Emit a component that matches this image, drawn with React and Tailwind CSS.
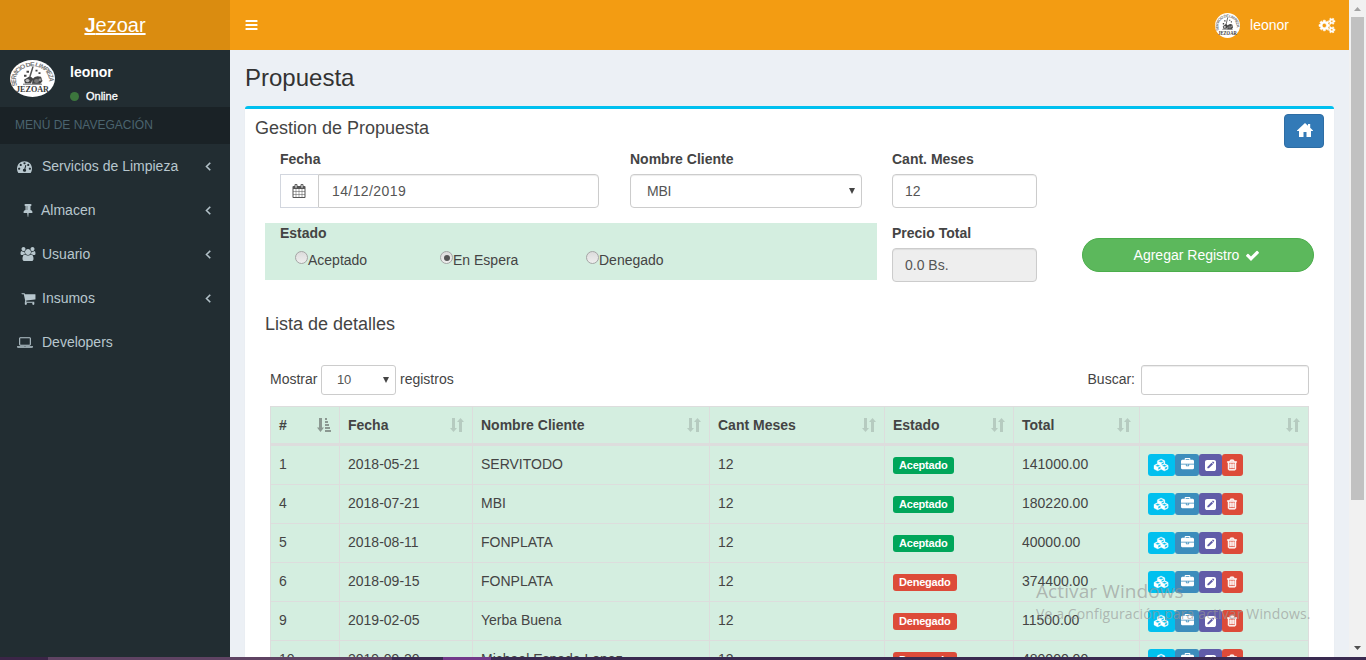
import React from "react";

const ICONS = {
  tachometer: [1792, "M384 1152q0-53-37.5-90.5t-90.5-37.5-90.5 37.5-37.5 90.5 37.5 90.5 90.5 37.5 90.5-37.5 37.5-90.5zm192-448q0-53-37.5-90.5t-90.5-37.5-90.5 37.5-37.5 90.5 37.5 90.5 90.5 37.5 90.5-37.5 37.5-90.5zm428 481l101-382q6-26-7.5-48.5t-38.5-29.5-48 6.5-30 39.5l-101 382q-60 5-107 43.5t-63 98.5q-20 77 20 146t117 89 146-20 89-117q16-60-6-117t-72-91zm660-33q0-53-37.5-90.5t-90.5-37.5-90.5 37.5-37.5 90.5 37.5 90.5 90.5 37.5 90.5-37.5 37.5-90.5zm-640-640q0-53-37.5-90.5t-90.5-37.5-90.5 37.5-37.5 90.5 37.5 90.5 90.5 37.5 90.5-37.5 37.5-90.5zm448 192q0-53-37.5-90.5t-90.5-37.5-90.5 37.5-37.5 90.5 37.5 90.5 90.5 37.5 90.5-37.5 37.5-90.5zm320 448q0 261-141 483-19 29-54 29h-1402q-35 0-54-29-141-221-141-483 0-182 71-348t191-286 286-191 348-71 348 71 286 191 191 286 71 348z"],
  users: [2048, "M657 896q-162 5-265 128h-134q-82 0-138-40.5t-56-118.5q0-353 124-353 6 0 43.5 21t97.5 42.5 119 21.5q67 0 133-23-5 37-5 66 0 139 81 256zm1071 637q0 120-73 189.5t-194 69.5h-874q-121 0-194-69.5t-73-189.5q0-53 3.5-103.5t14-109 26.5-108.5 43-97.5 62-81 85.5-53.5 111.5-20q10 0 43 21.5t73 48 107 48 135 21.5 135-21.5 107-48 73-48 43-21.5q61 0 111.5 20t85.5 53.5 62 81 43 97.5 26.5 108.5 14 109 3.5 103.5zm-1024-1277q0 106-75 181t-181 75-181-75-75-181 75-181 181-75 181 75 75 181zm704 384q0 159-112.5 271.5t-271.5 112.5-271.5-112.5-112.5-271.5 112.5-271.5 271.5-112.5 271.5 112.5 112.5 271.5zm576 225q0 78-56 118.5t-138 40.5h-134q-103-123-265-128 81-117 81-256 0-29-5-66 66 23 133 23 59 0 119-21.5t97.5-42.5 43.5-21q124 0 124 353zm-128-609q0 106-75 181t-181 75-181-75-75-181 75-181 181-75 181 75 75 181z"],
  cart: [1792, "M704 1536q0 52-38 90t-90 38-90-38-38-90 38-90 90-38 90 38 38 90zm896 0q0 52-38 90t-90 38-90-38-38-90 38-90 90-38 90 38 38 90zm128-1088v512q0 24-16.5 42.5t-40.5 21.5l-1044 122q13 60 13 70 0 16-24 64h920q26 0 45 19t19 45-19 45-45 19h-1024q-26 0-45-19t-19-45q0-11 8-31.5t16-36 21.5-40 15.5-29.5l-177-823h-204q-26 0-45-19t-19-45 19-45 45-19h256q16 0 28.5 6.5t19.5 15.5 13 24.5 8 26 5.5 29.5 4.5 26h1201q26 0 45 19t19 45z"],
  tack: [1792, "M800 864v-448q0-14-9-23t-23-9-23 9-9 23v448q0 14 9 23t23 9 23-9 9-23zm672 352q0 26-19 45t-45 19h-429l-51 483q-2 12-10.5 20.5t-20.5 8.5h-1q-27 0-32-27l-76-485h-404q-26 0-45-19t-19-45q0-123 78.5-221.5t177.5-98.5v-512q-52 0-90-38t-38-90 38-90 90-38h640q52 0 90 38t38 90-38 90-90 38v512q99 0 177.5 98.5t78.5 221.5z"],
  angle: [1792, "M1203 544q0 13-10 23l-393 393 393 393q10 10 10 23t-10 23l-50 50q-10 10-23 10t-23-10l-466-466q-10-10-10-23t10-23l466-466q10-10 23-10t23 10l50 50q10 10 10 23z"],
  laptop: [1920, "M416 1280q-66 0-113-47t-47-113v-704q0-66 47-113t113-47h1088q66 0 113 47t47 113v704q0 66-47 113t-113 47h-1088zm-32-864v704q0 13 9.5 22.5t22.5 9.5h1088q13 0 22.5-9.5t9.5-22.5v-704q0-13-9.5-22.5t-22.5-9.5h-1088q-13 0-22.5 9.5t-9.5 22.5zm1376 928h160v96q0 40-47 68t-113 28h-1600q-66 0-113-28t-47-68v-96h1760zm-720 96q16 0 16-16t-16-16h-160q-16 0-16 16t16 16h160z"],
  cogs: [1920, "M896 896q0-106-75-181t-181-75-181 75-75 181 75 181 181 75 181-75 75-181zm768 512q0-52-38-90t-90-38-90 38-38 90q0 53 37.5 90.5t90.5 37.5 90.5-37.5 37.5-90.5zm0-1024q0-52-38-90t-90-38-90 38-38 90q0 53 37.5 90.5t90.5 37.5 90.5-37.5 37.5-90.5zm-384 421v185q0 10-7 19.5t-16 10.5l-155 24q-11 35-32 76 34 48 90 115 7 11 7 20 0 12-7 19-23 30-82.5 89.5t-78.5 59.5q-11 0-21-7l-115-90q-37 19-77 31-11 108-23 155-7 24-30 24h-186q-11 0-20-7.5t-10-17.5l-23-153q-34-10-75-31l-118 89q-7 7-20 7-11 0-21-8-144-133-144-160 0-9 7-19 10-14 41-53t47-61q-23-44-35-82l-152-24q-10-1-17-9.5t-7-19.5v-185q0-10 7-19.5t16-10.5l155-24q11-35 32-76-34-48-90-115-7-11-7-20 0-12 7-20 22-30 82-89t79-59q11 0 21 7l115 90q34-18 77-32 11-108 23-154 7-24 30-24h186q11 0 20 7.5t10 17.5l23 153q34 10 75 31l118-89q8-7 20-7 11 0 21 8 144 133 144 160 0 8-7 19-12 16-42 54t-45 60q23 48 34 82l152 23q10 2 17 10.5t7 19.5zm640 533v140q0 16-149 31-12 27-30 52 51 113 51 138 0 4-4 7-122 71-124 71-8 0-46-47t-52-68q-20 2-30 2t-30-2q-14 21-52 68t-46 47q-2 0-124-71-4-3-4-7 0-25 51-138-18-25-30-52-149-15-149-31v-140q0-16 149-31 13-29 30-52-51-113-51-138 0-4 4-7 4-2 35-20t59-34 30-16q8 0 46 46.5t52 67.5q20-2 30-2t30 2q51-71 92-112l6-2q4 0 124 70 4 3 4 7 0 25-51 138 17 23 30 52 149 15 149 31zm0-1024v140q0 16-149 31-12 27-30 52 51 113 51 138 0 4-4 7-122 71-124 71-8 0-46-47t-52-68q-20 2-30 2t-30-2q-14 21-52 68t-46 47q-2 0-124-71-4-3-4-7 0-25 51-138-18-25-30-52-149-15-149-31v-140q0-16 149-31 13-29 30-52-51-113-51-138 0-4 4-7 4-2 35-20t59-34 30-16q8 0 46 46.5t52 67.5q20-2 30-2t30 2q51-71 92-112l6-2q4 0 124 70 4 3 4 7 0 25-51 138 17 23 30 52 149 15 149 31z"],
  cubes: [2304, "M640 1632l384-192v-314l-384 164v342zm-64-454l404-173-404-173-404 173zm1088 454l384-192v-314l-384 164v342zm-64-454l404-173-404-173-404 173zm-448-293l384-165v-266l-384 164v267zm-64-379l441-189-441-189-441 189zm1088 518v416q0 36-19 67t-52 47l-448 224q-25 14-57 14t-57-14l-448-224q-4-2-7-4-2 2-7 4l-448 224q-25 14-57 14t-57-14l-448-224q-33-16-52-47t-19-67v-416q0-38 21.5-70t56.5-48l434-186v-400q0-38 21.5-70t56.5-48l448-192q23-10 50-10t50 10l448 192q35 16 56.5 48t21.5 70v400l434 186q36 16 57 48t21 70z"],
  briefcase: [1792, "M640 256h512v-128h-512v128zm1152 640v480q0 66-47 113t-113 47h-1472q-66 0-113-47t-47-113v-480h672v160q0 26 19 45t45 19h320q26 0 45-19t19-45v-160h672zm-768 0v128h-256v-128h256zm768-480v384h-1792v-384q0-66 47-113t113-47h352v-160q0-40 28-68t68-28h576q40 0 68 28t28 68v160h352q66 0 113 47t47 113z"],
  pencil: [1536, "M288 128h960q119 0 203.500 84.500t84.500 203.500v960q0 119-84.500 203.500t-203.500 84.500h-960q-119 0-203.500-84.500t-84.500-203.500v-960q0-119 84.500-203.500t203.500-84.500zM330 1090v206h206l590-590-206-206zM980 440l206 206 70-70q28-28 28-62t-28-62l-82-82q-28-28-62-28t-62 28z"],
  trash: [1792, "M704 736v576q0 14-9 23t-23 9h-64q-14 0-23-9t-9-23v-576q0-14 9-23t23-9h64q14 0 23 9t9 23zm256 0v576q0 14-9 23t-23 9h-64q-14 0-23-9t-9-23v-576q0-14 9-23t23-9h64q14 0 23 9t9 23zm256 0v576q0 14-9 23t-23 9h-64q-14 0-23-9t-9-23v-576q0-14 9-23t23-9h64q14 0 23 9t9 23zm128 724v-948h-896v948q0 22 7 40.5t14.5 27 10.5 8.5h832q3 0 10.5-8.5t14.5-27 7-40.5zm-672-1076h448l-48-117q-7-9-17-11h-317q-10 2-17 11zm928 32v64q0 14-9 23t-23 9h-96v948q0 83-47 143.5t-113 60.5h-832q-66 0-113-58.5t-47-141.5v-952h-96q-14 0-23-9t-9-23v-64q0-14 9-23t23-9h309l70-167q15-37 54-63t79-26h320q40 0 79 26t54 63l70 167h309q14 0 23 9t9 23z"],
  calendar: [1792, "M192 1664h288v-288h-288v288zm352 0h320v-288h-320v288zm-352-352h288v-320h-288v320zm352 0h320v-320h-320v320zm-352-384h288v-288h-288v288zm736 736h320v-288h-320v288zm-384-736h320v-288h-320v288zm768 736h288v-288h-288v288zm-384-352h320v-320h-320v320zm-352-864v-288q0-13-9.5-22.5t-22.5-9.5h-64q-13 0-22.5 9.5t-9.5 22.5v288q0 13 9.5 22.5t22.5 9.5h64q13 0 22.5-9.5t9.5-22.5zm736 864h288v-320h-288v320zm-384-384h320v-288h-320v288zm384 0h288v-288h-288v288zm32-480v-288q0-13-9.5-22.5t-22.5-9.5h-64q-13 0-22.5 9.5t-9.5 22.5v288q0 13 9.5 22.5t22.5 9.5h64q13 0 22.5-9.5t9.5-22.5zm384-64v1280q0 52-38 90t-90 38h-1408q-52 0-90-38t-38-90v-1280q0-52 38-90t90-38h128v-96q0-66 47-113t113-47h64q66 0 113 47t47 113v96h384v-96q0-66 47-113t113-47h64q66 0 113 47t47 113v96h128q52 0 90 38t38 90z"],
  check: [1792, "M1671 566q0 40-28 68l-724 724-136 136q-28 28-68 28t-68-28l-136-136-362-362q-28-28-28-68t28-68l136-136q28-28 68-28t68 28l294 295 656-657q28-28 68-28t68 28l136 136q28 28 28 68z"],
  bars: [1536, "M64 256h1408q64 0 64 64v128q0 64-64 64h-1408q-64 0-64-64v-128q0-64 64-64zM64 768h1408q64 0 64 64v128q0 64-64 64h-1408q-64 0-64-64v-128q0-64 64-64zM64 1280h1408q64 0 64 64v128q0 64-64 64h-1408q-64 0-64-64v-128q0-64 64-64z"],
};

function Icon({ name, className, weight = 0 }) {
  const [w, d] = ICONS[name];
  return (
    <svg viewBox={`0 0 ${w} 1792`} className={`block shrink-0 overflow-visible ${className}`} fill="currentColor" stroke="currentColor" strokeWidth={weight} fillRule={name === "pencil" ? "evenodd" : "nonzero"}>
      <path d={d} />
    </svg>
  );
}

function Logo({ id, className }) {
  return (
    <svg viewBox="0 0 90 90" preserveAspectRatio="none" className={`block shrink-0 ${className}`}>
      <circle cx="45" cy="45" r="45" fill="#fff" />
      <path id={id} d="M15 62A33 33 0 1 1 75 62" fill="none" />
      <text fontFamily="Liberation Sans" fontWeight="700" fontSize="14" fill="#777">
        <textPath href={`#${id}`} textLength="122">SERVICIO DE LIMPIEZA</textPath>
      </text>
      <path d="M46 16L40 40" stroke="#555" strokeWidth="3" />
      <path d="M33 26h5v5h-5zM28 36h5v5h-5zM51 24h4v4h-4zM57 30h4v4h-4zM28 48l12-9 6 6-4 12H30zM45 46q6-10 17-5l3 10-5 8H44z" fill="#444" />
      <circle cx="35" cy="50" r="4" fill="#bbb" />
      <circle cx="53" cy="51" r="5" fill="#777" />
      <circle cx="60" cy="48" r="3" fill="#999" />
      <path d="M26 59h38" stroke="#888" strokeWidth="3" />
      <text x="12" y="79" textLength="66" lengthAdjust="spacingAndGlyphs" fontFamily="Liberation Serif" fontWeight="700" fontSize="21" fill="#3a3a3a">JEZOAR</text>
    </svg>
  );
}

function Sort({ active }) {
  return active ? (
    <svg viewBox="0 0 14 14" className="block h-[14px] w-[14px] opacity-50" fill="#444">
      <path d="M2 0h3v9.500h2L3.500 14 0 9.500h2zM8 0h2v2H8zM8 3h3v2H8zM8 6h4v2H8zM8 9h5v2H8zM8 12h6v2H8z" />
    </svg>
  ) : (
    <svg viewBox="0 0 14 14" className="block h-[14px] w-[14px] opacity-20" fill="#444">
      <path d="M2 0h3v10h2L3.500 14 0 10h2zM9 14V4H7l3.500-4L14 4h-2v10z" />
    </svg>
  );
}

const MENU = [
  ["tachometer", "Servicios de Limpieza", "h-[15px] w-[15px] ml-[2px] mr-[10px]", true],
  ["tack", "Almacen", "h-[14px] w-[14px] ml-[6px] mr-[6px]", true],
  ["users", "Usuario", "h-[14px] w-[16px] ml-[5px] mr-[6px]", true],
  ["cart", "Insumos", "h-[15px] w-[15px] ml-[6px] mr-[6px]", true],
  ["laptop", "Developers", "h-[15px] w-[16px] ml-[2px] mr-[9px]", false],
];

const ROWS = [
  ["1", "2018-05-21", "SERVITODO", "12", true, "141000.00"],
  ["4", "2018-07-21", "MBI", "12", true, "180220.00"],
  ["5", "2018-08-11", "FONPLATA", "12", true, "40000.00"],
  ["6", "2018-09-15", "FONPLATA", "12", false, "374400.00"],
  ["9", "2019-02-05", "Yerba Buena", "12", false, "11500.00"],
  ["10", "2019-09-20", "Michael Espada Lopez", "12", false, "480000.00"],
];

const COLUMNS = [
  ["#", "w-[69px]"],
  ["Fecha", "w-[133px]"],
  ["Nombre Cliente", "w-[237px]"],
  ["Cant Meses", "w-[175px]"],
  ["Estado", "w-[129px]"],
  ["Total", "w-[126px]"],
  ["", "w-[169px]"],
];

function Radio({ label, checked, className }) {
  return (
    <label className={`flex items-start ${className}`}>
      <span className="mt-px flex h-[13px] w-[13px] items-center justify-center rounded-full border border-[#a5a5a5] bg-linear-to-b from-[#dcdcdc] to-[#eee]">
        {checked && <span className="h-[6px] w-[6px] rounded-full bg-[#555]" />}
      </span>
      <span className="leading-5">{label}</span>
    </label>
  );
}

function Caret() {
  return (
    <svg viewBox="0 0 6 6" className="block h-[6px] w-[6px]" fill="#444">
      <path d="M0 0h6L3 6z" />
    </svg>
  );
}

const FIELD = "flex h-[34px] items-center rounded-[4px] border border-[#ccc] text-[#555] shadow-[inset_0_1px_1px_rgba(0,0,0,0.075)]";

function Sidebar() {
  return (
    <aside className="w-[230px] shrink-0 bg-[#222d32]">
      <div className="flex h-[57px] pl-[10px] pt-[10px] text-white">
        <Logo id="ring-side" className="h-[37px] w-[45px]" />
        <div className="ml-[15px]">
          <div className="mt-[2px] font-bold leading-5">leonor</div>
          <div className="mt-[6px] flex items-center text-[11px] font-medium leading-4">
            <span className="mr-[7px] h-[9px] w-[9px] rounded-full bg-[#3c763d]" />
            <span className="[-webkit-text-stroke:0.3px_white]">Online</span>
          </div>
        </div>
      </div>
      <div className="h-[37px] bg-[#1a2226] pl-[15px] text-[12px] leading-[36px] text-[#4b646f]">MENÚ DE NAVEGACIÓN</div>
      {MENU.map(([icon, text, cls, sub]) => (
        <div key={text} className="flex h-[44px] items-center pl-[15px] pr-[15px] text-[#b8c7ce]">
          <Icon name={icon} className={cls} />
          <span className="grow">{text}</span>
          {sub && <Icon name="angle" weight={70} className="h-[14px] w-[14px]" />}
        </div>
      ))}
    </aside>
  );
}

function Actions() {
  return (
    <div className="flex text-white">
      <span className="flex h-[22px] w-[27px] items-center justify-center rounded-[3px] bg-[#00c0ef]"><Icon name="cubes" weight={50} className="h-[12px] w-[15px]" /></span>
      <span className="flex h-[22px] w-[24px] items-center justify-center rounded-[3px] bg-[#3c8dbc]"><Icon name="briefcase" className="mb-px h-[13px] w-[13px]" /></span>
      <span className="flex h-[22px] w-[23px] items-center justify-center rounded-[3px] bg-[#605ca8]"><Icon name="pencil" className="h-[13px] w-[11px]" /></span>
      <span className="flex h-[22px] w-[21px] items-center justify-center rounded-[3px] bg-[#dd4b39]"><Icon name="trash" weight={90} className="mr-px h-[12px] w-[12px]" /></span>
    </div>
  );
}

function DetailTable() {
  return (
    <table className="w-[1039px] table-fixed border-separate border-spacing-0 border-l border-t border-[#ddd] bg-[#d4eee0]">
      <thead>
        <tr>
          {COLUMNS.map(([name, w], i) => (
            <th key={i} className={`h-[39px] border-b-[3px] border-r border-[#ddd] p-0 pl-2 pr-[8px] text-left font-bold ${w}`}>
              <div className="flex items-center justify-between">
                <span>{name}</span>
                <Sort active={i === 0} />
              </div>
            </th>
          ))}
        </tr>
      </thead>
      <tbody>
        {ROWS.map((r) => (
          <tr key={r[0]}>
            {[0, 1, 2, 3].map((i) => (
              <td key={i} className="h-[39px] whitespace-nowrap border-b border-r border-[#ddd] p-0 pb-[2px] pl-2">{r[i]}</td>
            ))}
            <td className="h-[39px] border-b border-r border-[#ddd] p-0 pl-2">
              <span className={`block h-[17px] w-fit rounded-[3px] px-[6px] text-[11px] font-bold leading-[17px] tracking-[-0.2px] text-white ${r[4] ? "bg-[#00a65a]" : "bg-[#dd4b39]"}`}>
                {r[4] ? "Aceptado" : "Denegado"}
              </span>
            </td>
            <td className="h-[39px] border-b border-r border-[#ddd] p-0 pb-[2px] pl-2">{r[5]}</td>
            <td className="h-[39px] border-b border-r border-[#ddd] p-0 pl-2"><Actions /></td>
          </tr>
        ))}
      </tbody>
    </table>
  );
}

export default function App() {
  return (
    <div className="relative flex h-[660px] w-[1366px] flex-col overflow-hidden font-['Liberation_Sans',Arial,sans-serif] text-[14px] leading-5 text-[#444]">
      <div className="flex h-[657px] overflow-hidden">
        <div className="flex w-[1349px] flex-col">
          <header className="flex h-[50px] shrink-0 bg-[#f39c12] text-white">
            <div className="w-[230px] bg-[#da8c10] text-center text-[20px] leading-[50px]">
              <span className="underline"><b>J</b>ezoar</span>
            </div>
            <div className="flex grow items-center pl-[15px] pr-[14px]">
              <Icon name="bars" className="h-[14px] w-[13px]" />
              <div className="grow" />
              <Logo id="ring-top" className="h-[25px] w-[25px]" />
              <span className="ml-[10px]">leonor</span>
              <Icon name="cogs" weight={70} className="ml-[30px] h-[15px] w-[16px]" />
            </div>
          </header>
          <div className="flex min-h-0 grow">
            <Sidebar />
            <main className="grow bg-[#ecf0f5] px-[15px]">
              <h1 className="h-[56px] pt-[15px] text-[24px] leading-[26px] text-[#333]">Propuesta</h1>
              <section className="h-[700px] w-[1089px] rounded-[3px] border-t-[3px] border-[#00c0ef] bg-white shadow-[0_1px_1px_rgba(0,0,0,0.1)]">
                <div className="flex h-[40px] justify-between pl-[10px] pr-[10px] pt-[5px]">
                  <h2 className="pt-[4px] text-[18px] leading-5">Gestion de Propuesta</h2>
                  <div className="flex h-[34px] w-[40px] items-center justify-center rounded-[4px] border border-[#2e6da4] bg-[#337ab7]">
                    <svg viewBox="0 0 16 14" className="mb-[2px] ml-px block h-[14px] w-[16px]" fill="#fff">
                      <path d="M8 0l3 2.800V1h2.200v3.800L16 7.500V8h-2v6H9.500V9h-3v5H2V8H0v-.5z" />
                    </svg>
                  </div>
                </div>
                <div className="flex h-[74px] pl-[35px]">
                  <div className="w-[350px]">
                    <div className="h-[25px] font-bold leading-5">Fecha</div>
                    <div className="flex w-[319px]">
                      <div className="flex h-[34px] w-[38px] items-center justify-center border border-r-0 border-[#d2d6de] pr-px text-[#555]">
                        <Icon name="calendar" className="h-[14px] w-[14px]" />
                      </div>
                      <div className={`${FIELD} grow rounded-l-none pl-[13px] tracking-[0.4px]`}>14/12/2019</div>
                    </div>
                  </div>
                  <div className="w-[262px]">
                    <div className="h-[25px] font-bold leading-5">Nombre Cliente</div>
                    <div className={`${FIELD} w-[232px] justify-between pl-[16px] pr-[6px]`}><span className="tracking-[-0.2px]">MBI</span><Caret /></div>
                  </div>
                  <div>
                    <div className="h-[25px] font-bold leading-5">Cant. Meses</div>
                    <div className={`${FIELD} w-[145px] pl-[12px]`}>12</div>
                  </div>
                </div>
                <div className="flex h-[91px] pl-[20px]">
                  <div className="h-[57px] w-[612px] bg-[#d4eee0]">
                    <div className="pl-[15px] font-bold leading-5">Estado</div>
                    <div className="flex pl-[30px] pt-[7px]">
                      <Radio label="Aceptado" className="w-[145px]" />
                      <Radio label="En Espera" checked className="w-[146px]" />
                      <Radio label="Denegado" className="" />
                    </div>
                  </div>
                  <div className="ml-[15px]">
                    <div className="h-[25px] font-bold leading-5">Precio Total</div>
                    <div className={`${FIELD} w-[145px] bg-[#eee] pl-[12px]`}>0.0 Bs.</div>
                  </div>
                  <div className="ml-[45px] mt-[15px] flex h-[34px] w-[232px] items-center justify-center rounded-[17px] border border-[#4cae4c] bg-[#5cb85c] pr-[2px] text-white">
                    Agregar Registro<Icon name="check" className="ml-[6px] h-[15px] w-[15px]" />
                  </div>
                </div>
                <h2 className="h-[51px] pl-[20px] text-[18px] leading-5">Lista de detalles</h2>
                <div className="flex h-[41px] w-[1064px] items-start pl-[25px]">
                  <span className="w-[51px] pt-[4px]">Mostrar</span>
                  <div className="flex h-[30px] w-[75px] items-center justify-between rounded-[3px] border border-[#ccc] pl-[15px] pr-[6px] text-[13px] text-[#555]"><span className="tracking-[-0.3px]">10</span><Caret /></div>
                  <span className="ml-[4px] grow pt-[4px]">registros</span>
                  <span className="mr-[6px] pt-[4px]">Buscar:</span>
                  <div className="h-[30px] w-[168px] rounded-[3px] border border-[#ccc] shadow-[inset_0_1px_1px_rgba(0,0,0,0.075)]" />
                </div>
                <div className="pl-[25px]"><DetailTable /></div>
              </section>
            </main>
          </div>
        </div>
        <div className="flex w-[17px] flex-col items-center bg-[#f1f1f1]">
          <svg viewBox="0 0 17 17" className="block h-[17px] w-[17px]" fill="#a3a3a3"><path d="M5 11l3.500-4L12 11z" /></svg>
          <div className="h-[483px] w-[13px] bg-[#c1c1c1]" />
          <div className="grow" />
          <svg viewBox="0 0 17 17" className="block h-[17px] w-[17px]" fill="#505050"><path d="M5 6l3.500 4L12 6z" /></svg>
        </div>
      </div>
      <div className="flex h-[3px] bg-[#3a2a50]">
        <div className="w-[48px] bg-[#3b2547]" />
        <div className="w-[344px] bg-[#5f4363]" />
        <div className="w-[51px]" />
        <div className="w-[48px] bg-[#72398a]" />
      </div>
      <div className="absolute left-[1036px] top-[579px] whitespace-nowrap font-['Open_Sans',sans-serif] text-[#969696]/65">
        <div className="text-[19px] leading-[24px] tracking-[0.1px]">Activar Windows</div>
        <div className="text-[14px] leading-[22px] tracking-[0.12px]">Ve a Configuración para activar Windows.</div>
      </div>
    </div>
  );
}
